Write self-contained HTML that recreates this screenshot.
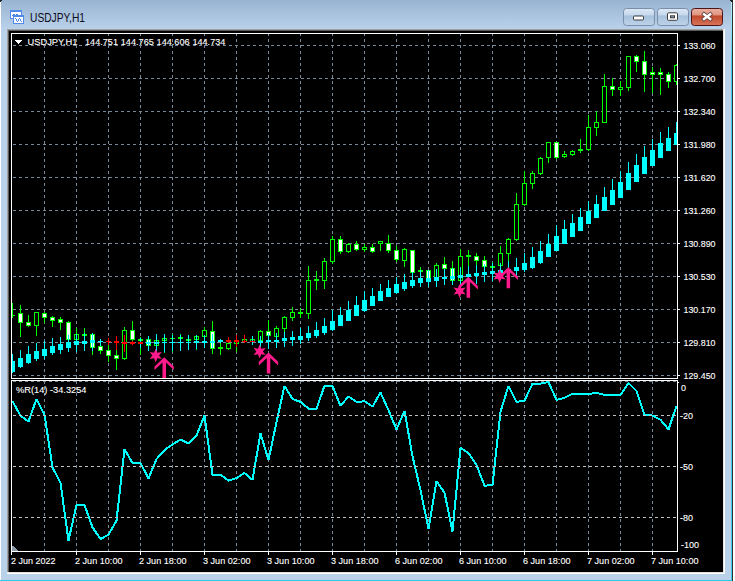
<!DOCTYPE html><html><head><meta charset="utf-8"><style>
html,body{margin:0;padding:0;background:#fff;overflow:hidden}
svg{display:block}
.t{font-family:"Liberation Sans",sans-serif;font-size:9.8px;fill:#ffffff;stroke:#ffffff;stroke-width:0.12px}
.tt{font-family:"Liberation Sans",sans-serif;font-size:12px;fill:#0a0a20}
</style></head><body><svg width="735" height="581" viewBox="0 0 735 581" shape-rendering="crispEdges">
<defs><linearGradient id="tb" x1="0" y1="0" x2="0" y2="1"><stop offset="0" stop-color="#98b4d2"/><stop offset="1" stop-color="#bad1ea"/></linearGradient><linearGradient id="bmin" x1="0" y1="0" x2="0" y2="1"><stop offset="0" stop-color="#dce8f5"/><stop offset="0.4" stop-color="#c6d8ec"/><stop offset="0.42" stop-color="#a6c0dc"/><stop offset="1" stop-color="#bed3ea"/></linearGradient><linearGradient id="bcls" x1="0" y1="0" x2="0" y2="1"><stop offset="0" stop-color="#eab0a2"/><stop offset="0.4" stop-color="#df9580"/><stop offset="0.42" stop-color="#c0472b"/><stop offset="1" stop-color="#d8765c"/></linearGradient><linearGradient id="rc" x1="0" y1="0" x2="0" y2="1"><stop offset="0" stop-color="#c0f4ff"/><stop offset="1" stop-color="#3ccdf0"/></linearGradient><clipPath id="mc"><rect x="12" y="34" width="665" height="344"/></clipPath><clipPath id="ic"><rect x="12" y="381" width="665" height="170"/></clipPath></defs>
<rect x="0" y="0" width="735" height="581" fill="#ffffff"/>
<rect x="0" y="0" width="732" height="581" fill="#bad1ea"/>
<rect x="0" y="0" width="732" height="29" fill="url(#tb)"/>
<rect x="0" y="0" width="1" height="581" fill="#ffffff"/>
<rect x="731" y="0" width="1" height="581" fill="#3ccdf0"/>
<rect x="731" y="2" width="1" height="60" fill="url(#rc)"/>
<rect x="732" y="0" width="1" height="581" fill="#303030"/>
<rect x="0" y="580" width="732" height="1" fill="#2ccbe8"/>
<path d="M0 0h2v1h-1v1h-1z" fill="#202020"/>
<path d="M730 0h3v2h-2v-1h-1z" fill="#202020"/>
<g shape-rendering="crispEdges"><rect x="10" y="10" width="12" height="9" fill="#4f8ae8"/><rect x="11" y="12" width="10" height="6" fill="#ffffff"/><path d="M12 15h1v-1h1v1h1M16 14h1v1h1v1h1" fill="none" stroke="#4f8ae8"/><rect x="13" y="15" width="11" height="9" fill="#4f8ae8"/><rect x="14" y="17" width="9" height="6" fill="#ffffff"/><rect x="15" y="18" width="1" height="1" fill="#4f8ae8"/><rect x="16" y="19" width="1" height="2" fill="#4f8ae8"/><rect x="17" y="21" width="1" height="1" fill="#4f8ae8"/><rect x="18" y="19" width="1" height="2" fill="#4f8ae8"/><rect x="19" y="18" width="1" height="1" fill="#4f8ae8"/><rect x="20" y="19" width="1" height="2" fill="#4f8ae8"/><rect x="21" y="21" width="1" height="1" fill="#4f8ae8"/></g>
<text x="30" y="22" class="tt" textLength="55" lengthAdjust="spacingAndGlyphs">USDJPY,H1</text>
<rect x="623.5" y="8.5" width="31" height="17" rx="3" ry="3" fill="url(#bmin)" stroke="#7a8ea8" shape-rendering="geometricPrecision"/>
<rect x="657.5" y="8.5" width="31" height="17" rx="3" ry="3" fill="url(#bmin)" stroke="#7a8ea8" shape-rendering="geometricPrecision"/>
<rect x="691.5" y="8.5" width="31" height="17" rx="3" ry="3" fill="url(#bcls)" stroke="#4a1418" shape-rendering="geometricPrecision"/>
<rect x="633.5" y="16" width="10" height="4" fill="#ffffff" stroke="#3c3c3c" rx="1" shape-rendering="geometricPrecision"/>
<rect x="667.5" y="12.8" width="10" height="7.5" fill="#ffffff" stroke="#3c3c3c" rx="1" shape-rendering="geometricPrecision"/>
<rect x="670.5" y="15.8" width="4" height="2" fill="#8aa0b8" stroke="#3c3c3c" shape-rendering="geometricPrecision"/>
<path d="M704 14.2L710.2 19M710.2 14.2L704 19" stroke="#5a3a38" stroke-width="4" stroke-linecap="square" shape-rendering="geometricPrecision"/>
<path d="M704 14.2L710.2 19M710.2 14.2L704 19" stroke="#ffffff" stroke-width="2.4" stroke-linecap="square" shape-rendering="geometricPrecision"/>
<rect x="7" y="29" width="718" height="545" fill="#ffffff"/>
<rect x="7" y="29" width="716" height="543" fill="#a0a0a0"/>
<rect x="8" y="30" width="715" height="542" fill="#5a5a5a"/>
<rect x="9" y="31" width="714" height="541" fill="#000000"/>
<rect x="723" y="29" width="1" height="544" fill="#e3e3e3"/>
<rect x="7" y="572" width="717" height="1" fill="#e3e3e3"/>
<line x1="13" y1="45.5" x2="676" y2="45.5" stroke="#778899" stroke-dasharray="3 3"/>
<line x1="13" y1="78.5" x2="676" y2="78.5" stroke="#778899" stroke-dasharray="3 3"/>
<line x1="13" y1="111.5" x2="676" y2="111.5" stroke="#778899" stroke-dasharray="3 3"/>
<line x1="13" y1="144.5" x2="676" y2="144.5" stroke="#778899" stroke-dasharray="3 3"/>
<line x1="13" y1="177.5" x2="676" y2="177.5" stroke="#778899" stroke-dasharray="3 3"/>
<line x1="13" y1="210.5" x2="676" y2="210.5" stroke="#778899" stroke-dasharray="3 3"/>
<line x1="13" y1="243.5" x2="676" y2="243.5" stroke="#778899" stroke-dasharray="3 3"/>
<line x1="13" y1="276.5" x2="676" y2="276.5" stroke="#778899" stroke-dasharray="3 3"/>
<line x1="13" y1="309.5" x2="676" y2="309.5" stroke="#778899" stroke-dasharray="3 3"/>
<line x1="13" y1="342.5" x2="676" y2="342.5" stroke="#778899" stroke-dasharray="3 3"/>
<line x1="13" y1="375.5" x2="676" y2="375.5" stroke="#778899" stroke-dasharray="3 3"/>
<line x1="44.5" y1="33" x2="44.5" y2="378" stroke="#778899" stroke-dasharray="3 3"/>
<line x1="44.5" y1="381" x2="44.5" y2="551" stroke="#778899" stroke-dasharray="3 3"/>
<line x1="76.5" y1="33" x2="76.5" y2="378" stroke="#778899" stroke-dasharray="3 3"/>
<line x1="76.5" y1="381" x2="76.5" y2="551" stroke="#778899" stroke-dasharray="3 3"/>
<line x1="108.5" y1="33" x2="108.5" y2="378" stroke="#778899" stroke-dasharray="3 3"/>
<line x1="108.5" y1="381" x2="108.5" y2="551" stroke="#778899" stroke-dasharray="3 3"/>
<line x1="140.5" y1="33" x2="140.5" y2="378" stroke="#778899" stroke-dasharray="3 3"/>
<line x1="140.5" y1="381" x2="140.5" y2="551" stroke="#778899" stroke-dasharray="3 3"/>
<line x1="172.5" y1="33" x2="172.5" y2="378" stroke="#778899" stroke-dasharray="3 3"/>
<line x1="172.5" y1="381" x2="172.5" y2="551" stroke="#778899" stroke-dasharray="3 3"/>
<line x1="204.5" y1="33" x2="204.5" y2="378" stroke="#778899" stroke-dasharray="3 3"/>
<line x1="204.5" y1="381" x2="204.5" y2="551" stroke="#778899" stroke-dasharray="3 3"/>
<line x1="236.5" y1="33" x2="236.5" y2="378" stroke="#778899" stroke-dasharray="3 3"/>
<line x1="236.5" y1="381" x2="236.5" y2="551" stroke="#778899" stroke-dasharray="3 3"/>
<line x1="268.5" y1="33" x2="268.5" y2="378" stroke="#778899" stroke-dasharray="3 3"/>
<line x1="268.5" y1="381" x2="268.5" y2="551" stroke="#778899" stroke-dasharray="3 3"/>
<line x1="300.5" y1="33" x2="300.5" y2="378" stroke="#778899" stroke-dasharray="3 3"/>
<line x1="300.5" y1="381" x2="300.5" y2="551" stroke="#778899" stroke-dasharray="3 3"/>
<line x1="332.5" y1="33" x2="332.5" y2="378" stroke="#778899" stroke-dasharray="3 3"/>
<line x1="332.5" y1="381" x2="332.5" y2="551" stroke="#778899" stroke-dasharray="3 3"/>
<line x1="364.5" y1="33" x2="364.5" y2="378" stroke="#778899" stroke-dasharray="3 3"/>
<line x1="364.5" y1="381" x2="364.5" y2="551" stroke="#778899" stroke-dasharray="3 3"/>
<line x1="396.5" y1="33" x2="396.5" y2="378" stroke="#778899" stroke-dasharray="3 3"/>
<line x1="396.5" y1="381" x2="396.5" y2="551" stroke="#778899" stroke-dasharray="3 3"/>
<line x1="428.5" y1="33" x2="428.5" y2="378" stroke="#778899" stroke-dasharray="3 3"/>
<line x1="428.5" y1="381" x2="428.5" y2="551" stroke="#778899" stroke-dasharray="3 3"/>
<line x1="460.5" y1="33" x2="460.5" y2="378" stroke="#778899" stroke-dasharray="3 3"/>
<line x1="460.5" y1="381" x2="460.5" y2="551" stroke="#778899" stroke-dasharray="3 3"/>
<line x1="492.5" y1="33" x2="492.5" y2="378" stroke="#778899" stroke-dasharray="3 3"/>
<line x1="492.5" y1="381" x2="492.5" y2="551" stroke="#778899" stroke-dasharray="3 3"/>
<line x1="524.5" y1="33" x2="524.5" y2="378" stroke="#778899" stroke-dasharray="3 3"/>
<line x1="524.5" y1="381" x2="524.5" y2="551" stroke="#778899" stroke-dasharray="3 3"/>
<line x1="556.5" y1="33" x2="556.5" y2="378" stroke="#778899" stroke-dasharray="3 3"/>
<line x1="556.5" y1="381" x2="556.5" y2="551" stroke="#778899" stroke-dasharray="3 3"/>
<line x1="588.5" y1="33" x2="588.5" y2="378" stroke="#778899" stroke-dasharray="3 3"/>
<line x1="588.5" y1="381" x2="588.5" y2="551" stroke="#778899" stroke-dasharray="3 3"/>
<line x1="620.5" y1="33" x2="620.5" y2="378" stroke="#778899" stroke-dasharray="3 3"/>
<line x1="620.5" y1="381" x2="620.5" y2="551" stroke="#778899" stroke-dasharray="3 3"/>
<line x1="652.5" y1="33" x2="652.5" y2="378" stroke="#778899" stroke-dasharray="3 3"/>
<line x1="652.5" y1="381" x2="652.5" y2="551" stroke="#778899" stroke-dasharray="3 3"/>
<line x1="13" y1="381.5" x2="676" y2="381.5" stroke="#778899" stroke-dasharray="3 3"/>
<g clip-path="url(#mc)">
<rect x="12" y="303" width="1" height="15" fill="#00ff00"/>
<rect x="10" y="315" width="5" height="1" fill="#00ff00"/>
<rect x="20" y="305" width="1" height="32" fill="#00ff00"/>
<rect x="18" y="313" width="5" height="10" fill="#00ff00"/>
<rect x="19" y="314" width="3" height="8" fill="#ffffff"/>
<rect x="28" y="315" width="1" height="12" fill="#00ff00"/>
<rect x="26" y="322" width="5" height="4" fill="#00ff00"/>
<rect x="27" y="323" width="3" height="2" fill="#ffffff"/>
<rect x="36" y="312" width="1" height="24" fill="#00ff00"/>
<rect x="34" y="312" width="5" height="14" fill="#00ff00"/>
<rect x="35" y="313" width="3" height="12" fill="#000000"/>
<rect x="44" y="312" width="1" height="11" fill="#00ff00"/>
<rect x="42" y="313" width="5" height="5" fill="#00ff00"/>
<rect x="43" y="314" width="3" height="3" fill="#ffffff"/>
<rect x="52" y="316" width="1" height="11" fill="#00ff00"/>
<rect x="50" y="317" width="5" height="4" fill="#00ff00"/>
<rect x="51" y="318" width="3" height="2" fill="#ffffff"/>
<rect x="60" y="317" width="1" height="13" fill="#00ff00"/>
<rect x="58" y="319" width="5" height="4" fill="#00ff00"/>
<rect x="59" y="320" width="3" height="2" fill="#ffffff"/>
<rect x="68" y="321" width="1" height="25" fill="#00ff00"/>
<rect x="66" y="322" width="5" height="18" fill="#00ff00"/>
<rect x="67" y="323" width="3" height="16" fill="#ffffff"/>
<rect x="76" y="328" width="1" height="18" fill="#00ff00"/>
<rect x="74" y="334" width="5" height="6" fill="#00ff00"/>
<rect x="75" y="335" width="3" height="4" fill="#000000"/>
<rect x="84" y="328" width="1" height="22" fill="#00ff00"/>
<rect x="82" y="334" width="5" height="2" fill="#00ff00"/>
<rect x="92" y="333" width="1" height="22" fill="#00ff00"/>
<rect x="90" y="334" width="5" height="14" fill="#00ff00"/>
<rect x="91" y="335" width="3" height="12" fill="#ffffff"/>
<rect x="100" y="341" width="1" height="13" fill="#00ff00"/>
<rect x="98" y="346" width="5" height="5" fill="#00ff00"/>
<rect x="99" y="347" width="3" height="3" fill="#ffffff"/>
<rect x="108" y="341" width="1" height="21" fill="#00ff00"/>
<rect x="106" y="350" width="5" height="6" fill="#00ff00"/>
<rect x="107" y="351" width="3" height="4" fill="#ffffff"/>
<rect x="116" y="349" width="1" height="21" fill="#00ff00"/>
<rect x="114" y="355" width="5" height="4" fill="#00ff00"/>
<rect x="115" y="356" width="3" height="2" fill="#ffffff"/>
<rect x="124" y="327" width="1" height="33" fill="#00ff00"/>
<rect x="122" y="330" width="5" height="29" fill="#00ff00"/>
<rect x="123" y="331" width="3" height="27" fill="#000000"/>
<rect x="132" y="321" width="1" height="21" fill="#00ff00"/>
<rect x="130" y="330" width="5" height="10" fill="#00ff00"/>
<rect x="131" y="331" width="3" height="8" fill="#ffffff"/>
<rect x="140" y="337" width="1" height="18" fill="#00ff00"/>
<rect x="138" y="339" width="5" height="2" fill="#00ff00"/>
<rect x="148" y="336" width="1" height="15" fill="#00ff00"/>
<rect x="146" y="339" width="5" height="7" fill="#00ff00"/>
<rect x="147" y="340" width="3" height="5" fill="#ffffff"/>
<rect x="156" y="334" width="1" height="18" fill="#00ff00"/>
<rect x="154" y="340" width="5" height="6" fill="#00ff00"/>
<rect x="155" y="341" width="3" height="4" fill="#000000"/>
<rect x="164" y="334" width="1" height="19" fill="#00ff00"/>
<rect x="162" y="338" width="5" height="3" fill="#00ff00"/>
<rect x="163" y="339" width="3" height="1" fill="#000000"/>
<rect x="172" y="334" width="1" height="18" fill="#00ff00"/>
<rect x="170" y="338" width="5" height="1" fill="#00ff00"/>
<rect x="180" y="334" width="1" height="17" fill="#00ff00"/>
<rect x="178" y="337" width="5" height="2" fill="#00ff00"/>
<rect x="188" y="335" width="1" height="15" fill="#00ff00"/>
<rect x="186" y="339" width="5" height="2" fill="#00ff00"/>
<rect x="196" y="335" width="1" height="15" fill="#00ff00"/>
<rect x="194" y="336" width="5" height="4" fill="#00ff00"/>
<rect x="195" y="337" width="3" height="2" fill="#000000"/>
<rect x="204" y="327" width="1" height="21" fill="#00ff00"/>
<rect x="202" y="330" width="5" height="7" fill="#00ff00"/>
<rect x="203" y="331" width="3" height="5" fill="#000000"/>
<rect x="212" y="321" width="1" height="33" fill="#00ff00"/>
<rect x="210" y="331" width="5" height="18" fill="#00ff00"/>
<rect x="211" y="332" width="3" height="16" fill="#ffffff"/>
<rect x="220" y="339" width="1" height="16" fill="#00ff00"/>
<rect x="218" y="347" width="5" height="2" fill="#00ff00"/>
<rect x="228" y="337" width="1" height="13" fill="#00ff00"/>
<rect x="226" y="343" width="5" height="6" fill="#00ff00"/>
<rect x="227" y="344" width="3" height="4" fill="#000000"/>
<rect x="236" y="335" width="1" height="17" fill="#00ff00"/>
<rect x="234" y="340" width="5" height="4" fill="#00ff00"/>
<rect x="235" y="341" width="3" height="2" fill="#000000"/>
<rect x="244" y="335" width="1" height="7" fill="#00ff00"/>
<rect x="242" y="339" width="5" height="3" fill="#00ff00"/>
<rect x="243" y="340" width="3" height="1" fill="#000000"/>
<rect x="252" y="336" width="1" height="9" fill="#00ff00"/>
<rect x="250" y="339" width="5" height="3" fill="#00ff00"/>
<rect x="251" y="340" width="3" height="1" fill="#000000"/>
<rect x="260" y="330" width="1" height="17" fill="#00ff00"/>
<rect x="258" y="331" width="5" height="10" fill="#00ff00"/>
<rect x="259" y="332" width="3" height="8" fill="#000000"/>
<rect x="268" y="320" width="1" height="29" fill="#00ff00"/>
<rect x="266" y="331" width="5" height="5" fill="#00ff00"/>
<rect x="267" y="332" width="3" height="3" fill="#ffffff"/>
<rect x="276" y="326" width="1" height="22" fill="#00ff00"/>
<rect x="274" y="328" width="5" height="9" fill="#00ff00"/>
<rect x="275" y="329" width="3" height="7" fill="#000000"/>
<rect x="284" y="316" width="1" height="31" fill="#00ff00"/>
<rect x="282" y="317" width="5" height="12" fill="#00ff00"/>
<rect x="283" y="318" width="3" height="10" fill="#000000"/>
<rect x="292" y="307" width="1" height="14" fill="#00ff00"/>
<rect x="290" y="312" width="5" height="6" fill="#00ff00"/>
<rect x="291" y="313" width="3" height="4" fill="#000000"/>
<rect x="300" y="308" width="1" height="10" fill="#00ff00"/>
<rect x="298" y="312" width="5" height="2" fill="#00ff00"/>
<rect x="308" y="266" width="1" height="53" fill="#00ff00"/>
<rect x="306" y="280" width="5" height="34" fill="#00ff00"/>
<rect x="307" y="281" width="3" height="32" fill="#000000"/>
<rect x="316" y="271" width="1" height="19" fill="#00ff00"/>
<rect x="314" y="279" width="5" height="2" fill="#00ff00"/>
<rect x="324" y="258" width="1" height="31" fill="#00ff00"/>
<rect x="322" y="261" width="5" height="20" fill="#00ff00"/>
<rect x="323" y="262" width="3" height="18" fill="#000000"/>
<rect x="332" y="236" width="1" height="28" fill="#00ff00"/>
<rect x="330" y="239" width="5" height="23" fill="#00ff00"/>
<rect x="331" y="240" width="3" height="21" fill="#000000"/>
<rect x="340" y="236" width="1" height="18" fill="#00ff00"/>
<rect x="338" y="239" width="5" height="13" fill="#00ff00"/>
<rect x="339" y="240" width="3" height="11" fill="#ffffff"/>
<rect x="348" y="243" width="1" height="10" fill="#00ff00"/>
<rect x="346" y="244" width="5" height="8" fill="#00ff00"/>
<rect x="347" y="245" width="3" height="6" fill="#000000"/>
<rect x="356" y="241" width="1" height="10" fill="#00ff00"/>
<rect x="354" y="244" width="5" height="6" fill="#00ff00"/>
<rect x="355" y="245" width="3" height="4" fill="#ffffff"/>
<rect x="364" y="244" width="1" height="8" fill="#00ff00"/>
<rect x="362" y="247" width="5" height="3" fill="#00ff00"/>
<rect x="363" y="248" width="3" height="1" fill="#000000"/>
<rect x="372" y="244" width="1" height="9" fill="#00ff00"/>
<rect x="370" y="247" width="5" height="5" fill="#00ff00"/>
<rect x="371" y="248" width="3" height="3" fill="#ffffff"/>
<rect x="380" y="241" width="1" height="10" fill="#00ff00"/>
<rect x="378" y="241" width="5" height="3" fill="#00ff00"/>
<rect x="379" y="242" width="3" height="1" fill="#000000"/>
<rect x="388" y="235" width="1" height="18" fill="#00ff00"/>
<rect x="386" y="243" width="5" height="8" fill="#00ff00"/>
<rect x="387" y="244" width="3" height="6" fill="#ffffff"/>
<rect x="396" y="246" width="1" height="16" fill="#00ff00"/>
<rect x="394" y="250" width="5" height="10" fill="#00ff00"/>
<rect x="395" y="251" width="3" height="8" fill="#ffffff"/>
<rect x="404" y="248" width="1" height="19" fill="#00ff00"/>
<rect x="402" y="249" width="5" height="12" fill="#00ff00"/>
<rect x="403" y="250" width="3" height="10" fill="#000000"/>
<rect x="412" y="250" width="1" height="24" fill="#00ff00"/>
<rect x="410" y="250" width="5" height="23" fill="#00ff00"/>
<rect x="411" y="251" width="3" height="21" fill="#ffffff"/>
<rect x="420" y="267" width="1" height="8" fill="#00ff00"/>
<rect x="418" y="270" width="5" height="2" fill="#00ff00"/>
<rect x="428" y="270" width="1" height="17" fill="#00ff00"/>
<rect x="426" y="270" width="5" height="11" fill="#00ff00"/>
<rect x="427" y="271" width="3" height="9" fill="#ffffff"/>
<rect x="436" y="263" width="1" height="24" fill="#00ff00"/>
<rect x="434" y="265" width="5" height="16" fill="#00ff00"/>
<rect x="435" y="266" width="3" height="14" fill="#000000"/>
<rect x="444" y="257" width="1" height="28" fill="#00ff00"/>
<rect x="442" y="264" width="5" height="5" fill="#00ff00"/>
<rect x="443" y="265" width="3" height="3" fill="#ffffff"/>
<rect x="452" y="261" width="1" height="24" fill="#00ff00"/>
<rect x="450" y="268" width="5" height="13" fill="#00ff00"/>
<rect x="451" y="269" width="3" height="11" fill="#ffffff"/>
<rect x="460" y="249" width="1" height="36" fill="#00ff00"/>
<rect x="458" y="256" width="5" height="25" fill="#00ff00"/>
<rect x="459" y="257" width="3" height="23" fill="#000000"/>
<rect x="468" y="250" width="1" height="16" fill="#00ff00"/>
<rect x="466" y="255" width="5" height="2" fill="#00ff00"/>
<rect x="476" y="253" width="1" height="24" fill="#00ff00"/>
<rect x="474" y="256" width="5" height="5" fill="#00ff00"/>
<rect x="475" y="257" width="3" height="3" fill="#ffffff"/>
<rect x="484" y="256" width="1" height="20" fill="#00ff00"/>
<rect x="482" y="260" width="5" height="7" fill="#00ff00"/>
<rect x="483" y="261" width="3" height="5" fill="#ffffff"/>
<rect x="492" y="262" width="1" height="11" fill="#00ff00"/>
<rect x="490" y="266" width="5" height="2" fill="#00ff00"/>
<rect x="500" y="246" width="1" height="25" fill="#00ff00"/>
<rect x="498" y="253" width="5" height="13" fill="#00ff00"/>
<rect x="499" y="254" width="3" height="11" fill="#000000"/>
<rect x="508" y="238" width="1" height="25" fill="#00ff00"/>
<rect x="506" y="239" width="5" height="15" fill="#00ff00"/>
<rect x="507" y="240" width="3" height="13" fill="#000000"/>
<rect x="516" y="193" width="1" height="48" fill="#00ff00"/>
<rect x="514" y="204" width="5" height="36" fill="#00ff00"/>
<rect x="515" y="205" width="3" height="34" fill="#000000"/>
<rect x="524" y="171" width="1" height="35" fill="#00ff00"/>
<rect x="522" y="183" width="5" height="22" fill="#00ff00"/>
<rect x="523" y="184" width="3" height="20" fill="#000000"/>
<rect x="532" y="171" width="1" height="18" fill="#00ff00"/>
<rect x="530" y="173" width="5" height="11" fill="#00ff00"/>
<rect x="531" y="174" width="3" height="9" fill="#000000"/>
<rect x="540" y="157" width="1" height="18" fill="#00ff00"/>
<rect x="538" y="158" width="5" height="16" fill="#00ff00"/>
<rect x="539" y="159" width="3" height="14" fill="#000000"/>
<rect x="548" y="142" width="1" height="21" fill="#00ff00"/>
<rect x="546" y="142" width="5" height="16" fill="#00ff00"/>
<rect x="547" y="143" width="3" height="14" fill="#000000"/>
<rect x="556" y="142" width="1" height="17" fill="#00ff00"/>
<rect x="554" y="142" width="5" height="16" fill="#00ff00"/>
<rect x="555" y="143" width="3" height="14" fill="#ffffff"/>
<rect x="564" y="151" width="1" height="7" fill="#00ff00"/>
<rect x="562" y="154" width="5" height="3" fill="#00ff00"/>
<rect x="563" y="155" width="3" height="1" fill="#000000"/>
<rect x="572" y="150" width="1" height="6" fill="#00ff00"/>
<rect x="570" y="151" width="5" height="4" fill="#00ff00"/>
<rect x="571" y="152" width="3" height="2" fill="#000000"/>
<rect x="580" y="139" width="1" height="14" fill="#00ff00"/>
<rect x="578" y="149" width="5" height="2" fill="#00ff00"/>
<rect x="588" y="115" width="1" height="36" fill="#00ff00"/>
<rect x="586" y="127" width="5" height="23" fill="#00ff00"/>
<rect x="587" y="128" width="3" height="21" fill="#000000"/>
<rect x="596" y="111" width="1" height="25" fill="#00ff00"/>
<rect x="594" y="122" width="5" height="6" fill="#00ff00"/>
<rect x="595" y="123" width="3" height="4" fill="#000000"/>
<rect x="604" y="74" width="1" height="49" fill="#00ff00"/>
<rect x="602" y="86" width="5" height="37" fill="#00ff00"/>
<rect x="603" y="87" width="3" height="35" fill="#000000"/>
<rect x="612" y="78" width="1" height="18" fill="#00ff00"/>
<rect x="610" y="86" width="5" height="4" fill="#00ff00"/>
<rect x="611" y="87" width="3" height="2" fill="#ffffff"/>
<rect x="620" y="81" width="1" height="15" fill="#00ff00"/>
<rect x="618" y="87" width="5" height="3" fill="#00ff00"/>
<rect x="619" y="88" width="3" height="1" fill="#000000"/>
<rect x="628" y="56" width="1" height="35" fill="#00ff00"/>
<rect x="626" y="56" width="5" height="32" fill="#00ff00"/>
<rect x="627" y="57" width="3" height="30" fill="#000000"/>
<rect x="636" y="55" width="1" height="17" fill="#00ff00"/>
<rect x="634" y="56" width="5" height="6" fill="#00ff00"/>
<rect x="635" y="57" width="3" height="4" fill="#ffffff"/>
<rect x="644" y="51" width="1" height="41" fill="#00ff00"/>
<rect x="642" y="61" width="5" height="14" fill="#00ff00"/>
<rect x="643" y="62" width="3" height="12" fill="#ffffff"/>
<rect x="652" y="67" width="1" height="26" fill="#00ff00"/>
<rect x="650" y="72" width="5" height="3" fill="#00ff00"/>
<rect x="651" y="73" width="3" height="1" fill="#ffffff"/>
<rect x="660" y="68" width="1" height="27" fill="#00ff00"/>
<rect x="658" y="72" width="5" height="3" fill="#00ff00"/>
<rect x="659" y="73" width="3" height="1" fill="#ffffff"/>
<rect x="668" y="72" width="1" height="16" fill="#00ff00"/>
<rect x="666" y="74" width="5" height="8" fill="#00ff00"/>
<rect x="667" y="75" width="3" height="6" fill="#ffffff"/>
<rect x="676" y="64" width="1" height="21" fill="#00ff00"/>
<rect x="674" y="65" width="5" height="17" fill="#00ff00"/>
<rect x="675" y="66" width="3" height="15" fill="#000000"/>
<rect x="12" y="354" width="1" height="19" fill="#00ffff"/>
<rect x="10" y="361" width="5" height="11" fill="#00ffff"/>
<rect x="20" y="350" width="1" height="18" fill="#00ffff"/>
<rect x="18" y="358" width="5" height="9" fill="#00ffff"/>
<rect x="28" y="346" width="1" height="18" fill="#00ffff"/>
<rect x="26" y="354" width="5" height="9" fill="#00ffff"/>
<rect x="36" y="343" width="1" height="18" fill="#00ffff"/>
<rect x="34" y="351" width="5" height="8" fill="#00ffff"/>
<rect x="44" y="341" width="1" height="18" fill="#00ffff"/>
<rect x="42" y="349" width="5" height="7" fill="#00ffff"/>
<rect x="52" y="338" width="1" height="17" fill="#00ffff"/>
<rect x="50" y="346" width="5" height="7" fill="#00ffff"/>
<rect x="60" y="337" width="1" height="17" fill="#00ffff"/>
<rect x="58" y="344" width="5" height="6" fill="#00ffff"/>
<rect x="68" y="335" width="1" height="17" fill="#00ffff"/>
<rect x="66" y="342" width="5" height="6" fill="#00ffff"/>
<rect x="76" y="334" width="1" height="18" fill="#00ffff"/>
<rect x="74" y="341" width="5" height="4" fill="#00ffff"/>
<rect x="84" y="333" width="1" height="18" fill="#00ffff"/>
<rect x="82" y="341" width="5" height="3" fill="#00ffff"/>
<rect x="92" y="333" width="1" height="18" fill="#00ffff"/>
<rect x="90" y="340" width="5" height="3" fill="#00ffff"/>
<rect x="100" y="339" width="1" height="7" fill="#00ffff"/>
<rect x="98" y="341" width="5" height="1" fill="#00ffff"/>
<rect x="108" y="338" width="1" height="7" fill="#ff0000"/>
<rect x="106" y="341" width="5" height="1" fill="#ff0000"/>
<rect x="116" y="336" width="1" height="14" fill="#ff0000"/>
<rect x="114" y="341" width="5" height="2" fill="#ff0000"/>
<rect x="124" y="335" width="1" height="17" fill="#ff0000"/>
<rect x="122" y="342" width="5" height="2" fill="#ff0000"/>
<rect x="132" y="341" width="1" height="4" fill="#ff0000"/>
<rect x="130" y="342" width="5" height="2" fill="#ff0000"/>
<rect x="140" y="338" width="1" height="10" fill="#00ffff"/>
<rect x="138" y="342" width="5" height="2" fill="#ff0000"/>
<rect x="148" y="336" width="1" height="15" fill="#00ffff"/>
<rect x="146" y="342" width="5" height="2" fill="#00ffff"/>
<rect x="156" y="334" width="1" height="18" fill="#00ffff"/>
<rect x="154" y="342" width="5" height="2" fill="#00ffff"/>
<rect x="164" y="334" width="1" height="18" fill="#00ffff"/>
<rect x="162" y="342" width="5" height="1" fill="#00ffff"/>
<rect x="172" y="335" width="1" height="16" fill="#00ffff"/>
<rect x="170" y="342" width="5" height="1" fill="#00ffff"/>
<rect x="180" y="335" width="1" height="16" fill="#00ffff"/>
<rect x="178" y="342" width="5" height="1" fill="#00ffff"/>
<rect x="188" y="335" width="1" height="15" fill="#00ffff"/>
<rect x="186" y="342" width="5" height="1" fill="#00ffff"/>
<rect x="196" y="335" width="1" height="14" fill="#00ffff"/>
<rect x="194" y="341" width="5" height="2" fill="#00ffff"/>
<rect x="204" y="335" width="1" height="13" fill="#00ffff"/>
<rect x="202" y="341" width="5" height="2" fill="#00ffff"/>
<rect x="212" y="334" width="1" height="14" fill="#00ffff"/>
<rect x="210" y="341" width="5" height="2" fill="#00ffff"/>
<rect x="220" y="339" width="1" height="4" fill="#00ffff"/>
<rect x="218" y="340" width="5" height="2" fill="#00ffff"/>
<rect x="228" y="337" width="1" height="6" fill="#ff0000"/>
<rect x="226" y="340" width="5" height="2" fill="#ff0000"/>
<rect x="236" y="335" width="1" height="12" fill="#ff0000"/>
<rect x="234" y="340" width="5" height="2" fill="#ff0000"/>
<rect x="244" y="335" width="1" height="8" fill="#ff0000"/>
<rect x="242" y="341" width="5" height="1" fill="#ff0000"/>
<rect x="252" y="336" width="1" height="9" fill="#00ffff"/>
<rect x="250" y="341" width="5" height="1" fill="#ff0000"/>
<rect x="260" y="336" width="1" height="11" fill="#00ffff"/>
<rect x="258" y="341" width="5" height="2" fill="#00ffff"/>
<rect x="268" y="333" width="1" height="16" fill="#00ffff"/>
<rect x="266" y="340" width="5" height="2" fill="#00ffff"/>
<rect x="276" y="333" width="1" height="15" fill="#00ffff"/>
<rect x="274" y="340" width="5" height="2" fill="#00ffff"/>
<rect x="284" y="332" width="1" height="15" fill="#00ffff"/>
<rect x="282" y="338" width="5" height="3" fill="#00ffff"/>
<rect x="292" y="331" width="1" height="15" fill="#00ffff"/>
<rect x="290" y="337" width="5" height="3" fill="#00ffff"/>
<rect x="300" y="328" width="1" height="16" fill="#00ffff"/>
<rect x="298" y="336" width="5" height="4" fill="#00ffff"/>
<rect x="308" y="326" width="1" height="15" fill="#00ffff"/>
<rect x="306" y="333" width="5" height="5" fill="#00ffff"/>
<rect x="316" y="322" width="1" height="16" fill="#00ffff"/>
<rect x="314" y="330" width="5" height="6" fill="#00ffff"/>
<rect x="324" y="318" width="1" height="17" fill="#00ffff"/>
<rect x="322" y="326" width="5" height="7" fill="#00ffff"/>
<rect x="332" y="310" width="1" height="21" fill="#00ffff"/>
<rect x="330" y="321" width="5" height="9" fill="#00ffff"/>
<rect x="340" y="307" width="1" height="19" fill="#00ffff"/>
<rect x="338" y="315" width="5" height="11" fill="#00ffff"/>
<rect x="348" y="301" width="1" height="20" fill="#00ffff"/>
<rect x="346" y="310" width="5" height="11" fill="#00ffff"/>
<rect x="356" y="296" width="1" height="20" fill="#00ffff"/>
<rect x="354" y="305" width="5" height="11" fill="#00ffff"/>
<rect x="364" y="291" width="1" height="21" fill="#00ffff"/>
<rect x="362" y="300" width="5" height="11" fill="#00ffff"/>
<rect x="372" y="288" width="1" height="18" fill="#00ffff"/>
<rect x="370" y="296" width="5" height="10" fill="#00ffff"/>
<rect x="380" y="284" width="1" height="17" fill="#00ffff"/>
<rect x="378" y="291" width="5" height="10" fill="#00ffff"/>
<rect x="388" y="280" width="1" height="17" fill="#00ffff"/>
<rect x="386" y="288" width="5" height="9" fill="#00ffff"/>
<rect x="396" y="277" width="1" height="17" fill="#00ffff"/>
<rect x="394" y="284" width="5" height="9" fill="#00ffff"/>
<rect x="404" y="274" width="1" height="17" fill="#00ffff"/>
<rect x="402" y="282" width="5" height="7" fill="#00ffff"/>
<rect x="412" y="272" width="1" height="16" fill="#00ffff"/>
<rect x="410" y="280" width="5" height="6" fill="#00ffff"/>
<rect x="420" y="270" width="1" height="17" fill="#00ffff"/>
<rect x="418" y="278" width="5" height="5" fill="#00ffff"/>
<rect x="428" y="270" width="1" height="17" fill="#00ffff"/>
<rect x="426" y="278" width="5" height="4" fill="#00ffff"/>
<rect x="436" y="269" width="1" height="18" fill="#00ffff"/>
<rect x="434" y="277" width="5" height="4" fill="#00ffff"/>
<rect x="444" y="269" width="1" height="16" fill="#00ffff"/>
<rect x="442" y="277" width="5" height="2" fill="#00ffff"/>
<rect x="452" y="268" width="1" height="17" fill="#00ffff"/>
<rect x="450" y="276" width="5" height="3" fill="#00ffff"/>
<rect x="460" y="267" width="1" height="18" fill="#00ffff"/>
<rect x="458" y="275" width="5" height="3" fill="#00ffff"/>
<rect x="468" y="266" width="1" height="17" fill="#00ffff"/>
<rect x="466" y="274" width="5" height="3" fill="#00ffff"/>
<rect x="476" y="265" width="1" height="19" fill="#00ffff"/>
<rect x="474" y="273" width="5" height="3" fill="#00ffff"/>
<rect x="484" y="264" width="1" height="18" fill="#00ffff"/>
<rect x="482" y="272" width="5" height="3" fill="#00ffff"/>
<rect x="492" y="263" width="1" height="18" fill="#00ffff"/>
<rect x="490" y="271" width="5" height="3" fill="#00ffff"/>
<rect x="500" y="263" width="1" height="17" fill="#00ffff"/>
<rect x="498" y="270" width="5" height="3" fill="#00ffff"/>
<rect x="508" y="261" width="1" height="16" fill="#00ffff"/>
<rect x="506" y="269" width="5" height="3" fill="#00ffff"/>
<rect x="516" y="258" width="1" height="18" fill="#00ffff"/>
<rect x="514" y="267" width="5" height="4" fill="#00ffff"/>
<rect x="524" y="253" width="1" height="19" fill="#00ffff"/>
<rect x="522" y="263" width="5" height="7" fill="#00ffff"/>
<rect x="532" y="247" width="1" height="22" fill="#00ffff"/>
<rect x="530" y="257" width="5" height="11" fill="#00ffff"/>
<rect x="540" y="241" width="1" height="23" fill="#00ffff"/>
<rect x="538" y="251" width="5" height="12" fill="#00ffff"/>
<rect x="548" y="234" width="1" height="23" fill="#00ffff"/>
<rect x="546" y="244" width="5" height="13" fill="#00ffff"/>
<rect x="556" y="225" width="1" height="26" fill="#00ffff"/>
<rect x="554" y="236" width="5" height="15" fill="#00ffff"/>
<rect x="564" y="220" width="1" height="24" fill="#00ffff"/>
<rect x="562" y="229" width="5" height="15" fill="#00ffff"/>
<rect x="572" y="214" width="1" height="23" fill="#00ffff"/>
<rect x="570" y="223" width="5" height="14" fill="#00ffff"/>
<rect x="580" y="208" width="1" height="23" fill="#00ffff"/>
<rect x="578" y="217" width="5" height="14" fill="#00ffff"/>
<rect x="588" y="201" width="1" height="23" fill="#00ffff"/>
<rect x="586" y="211" width="5" height="13" fill="#00ffff"/>
<rect x="596" y="195" width="1" height="23" fill="#00ffff"/>
<rect x="594" y="204" width="5" height="14" fill="#00ffff"/>
<rect x="604" y="187" width="1" height="24" fill="#00ffff"/>
<rect x="602" y="197" width="5" height="14" fill="#00ffff"/>
<rect x="612" y="179" width="1" height="26" fill="#00ffff"/>
<rect x="610" y="190" width="5" height="15" fill="#00ffff"/>
<rect x="620" y="171" width="1" height="27" fill="#00ffff"/>
<rect x="618" y="182" width="5" height="16" fill="#00ffff"/>
<rect x="628" y="162" width="1" height="28" fill="#00ffff"/>
<rect x="626" y="173" width="5" height="17" fill="#00ffff"/>
<rect x="636" y="154" width="1" height="28" fill="#00ffff"/>
<rect x="634" y="165" width="5" height="17" fill="#00ffff"/>
<rect x="644" y="146" width="1" height="28" fill="#00ffff"/>
<rect x="642" y="157" width="5" height="17" fill="#00ffff"/>
<rect x="652" y="139" width="1" height="27" fill="#00ffff"/>
<rect x="650" y="150" width="5" height="16" fill="#00ffff"/>
<rect x="660" y="132" width="1" height="26" fill="#00ffff"/>
<rect x="658" y="143" width="5" height="15" fill="#00ffff"/>
<rect x="668" y="127" width="1" height="24" fill="#00ffff"/>
<rect x="666" y="138" width="5" height="13" fill="#00ffff"/>
<rect x="676" y="122" width="1" height="23" fill="#00ffff"/>
<rect x="674" y="133" width="5" height="12" fill="#00ffff"/>
</g>
<g clip-path="url(#mc)"><polygon points="164.20,357.30 173.80,366.50 173.80,370.10 166.00,362.60 166.00,378.30 162.50,378.30 162.50,362.60 154.50,370.10 154.50,366.50" fill="#ff1a8c" shape-rendering="geometricPrecision"/></g>
<polygon points="155.70,348.50 157.35,352.64 161.76,352.00 159.00,355.50 161.76,359.00 157.35,358.36 155.70,362.50 154.05,358.36 149.64,359.00 152.40,355.50 149.64,352.00 154.05,352.64" fill="#ff1a8c" shape-rendering="geometricPrecision"/>
<g clip-path="url(#mc)"><polygon points="268.50,352.60 278.10,361.80 278.10,365.40 270.30,357.90 270.30,373.60 266.80,373.60 266.80,357.90 258.80,365.40 258.80,361.80" fill="#ff1a8c" shape-rendering="geometricPrecision"/></g>
<polygon points="259.60,344.50 261.25,348.64 265.66,348.00 262.90,351.50 265.66,355.00 261.25,354.36 259.60,358.50 257.95,354.36 253.54,355.00 256.30,351.50 253.54,348.00 257.95,348.64" fill="#ff1a8c" shape-rendering="geometricPrecision"/>
<g clip-path="url(#mc)"><polygon points="468.30,276.80 477.90,286.00 477.90,289.60 470.10,282.10 470.10,297.80 466.60,297.80 466.60,282.10 458.60,289.60 458.60,286.00" fill="#ff1a8c" shape-rendering="geometricPrecision"/></g>
<polygon points="459.60,284.00 461.25,288.14 465.66,287.50 462.90,291.00 465.66,294.50 461.25,293.86 459.60,298.00 457.95,293.86 453.54,294.50 456.30,291.00 453.54,287.50 457.95,288.14" fill="#ff1a8c" shape-rendering="geometricPrecision"/>
<g clip-path="url(#mc)"><polygon points="508.30,267.20 517.90,276.40 517.90,280.00 510.10,272.50 510.10,288.20 506.60,288.20 506.60,272.50 498.60,280.00 498.60,276.40" fill="#ff1a8c" shape-rendering="geometricPrecision"/></g>
<polygon points="499.60,269.00 501.25,273.14 505.66,272.50 502.90,276.00 505.66,279.50 501.25,278.86 499.60,283.00 497.95,278.86 493.54,279.50 496.30,276.00 493.54,272.50 497.95,273.14" fill="#ff1a8c" shape-rendering="geometricPrecision"/>
<g clip-path="url(#ic)"><polyline points="12.5,401.3 20.5,415.6 28.5,421.5 36.5,399.0 44.5,414.6 52.5,467.4 60.5,482.8 68.5,540.6 76.5,505.0 84.5,505.0 92.5,527.3 100.5,539.1 108.5,534.6 116.5,520.6 124.5,449.1 132.5,463.0 140.5,463.0 148.5,478.4 156.5,459.1 164.5,450.2 172.5,444.3 180.5,439.6 188.5,443.4 196.5,435.4 204.5,415.6 212.5,474.8 220.5,474.8 228.5,480.6 236.5,478.1 244.5,473.0 252.5,479.9 260.5,433.3 268.5,460.0 276.5,422.1 284.5,385.9 292.5,399.0 300.5,401.9 308.5,408.6 316.5,408.6 324.5,385.9 332.5,385.9 340.5,405.8 348.5,396.4 356.5,401.9 364.5,401.3 372.5,406.6 380.5,392.5 388.5,410.2 396.5,429.5 404.5,410.8 412.5,456.2 420.5,490.2 428.5,528.7 436.5,481.3 444.5,492.6 452.5,531.7 460.5,447.8 468.5,453.2 476.5,465.0 484.5,485.8 492.5,484.9 500.5,411.7 508.5,385.9 516.5,401.9 524.5,400.7 532.5,383.6 540.5,383.6 548.5,382.1 556.5,399.9 564.5,397.8 572.5,393.9 580.5,393.9 588.5,393.9 596.5,393.0 604.5,394.8 612.5,394.8 620.5,394.8 628.5,383.0 636.5,391.0 644.5,414.7 652.5,415.6 660.5,419.7 668.5,429.5 676.5,405.8" fill="none" stroke="#00ffff" stroke-width="2" stroke-linejoin="bevel"/></g>
<line x1="13" y1="415.5" x2="676" y2="415.5" stroke="#c0c0c0" stroke-dasharray="3 3"/>
<line x1="13" y1="466.5" x2="676" y2="466.5" stroke="#c0c0c0" stroke-dasharray="3 3"/>
<line x1="13" y1="517.5" x2="676" y2="517.5" stroke="#c0c0c0" stroke-dasharray="3 3"/>
<rect x="11.5" y="33.5" width="666" height="345" fill="none" stroke="#ffffff" stroke-width="1"/>
<rect x="11.5" y="380.5" width="666" height="171" fill="none" stroke="#ffffff" stroke-width="1"/>
<path d="M12 546h1l5 5h-6z" fill="#8a9aa8"/>
<rect x="678" y="45" width="2" height="1" fill="#ffffff"/>
<text x="683.5" y="48.9" class="t" textLength="32" lengthAdjust="spacingAndGlyphs">133.060</text>
<rect x="678" y="78" width="2" height="1" fill="#ffffff"/>
<text x="683.5" y="81.9" class="t" textLength="32" lengthAdjust="spacingAndGlyphs">132.700</text>
<rect x="678" y="111" width="2" height="1" fill="#ffffff"/>
<text x="683.5" y="114.9" class="t" textLength="32" lengthAdjust="spacingAndGlyphs">132.340</text>
<rect x="678" y="144" width="2" height="1" fill="#ffffff"/>
<text x="683.5" y="147.9" class="t" textLength="32" lengthAdjust="spacingAndGlyphs">131.980</text>
<rect x="678" y="177" width="2" height="1" fill="#ffffff"/>
<text x="683.5" y="180.9" class="t" textLength="32" lengthAdjust="spacingAndGlyphs">131.620</text>
<rect x="678" y="210" width="2" height="1" fill="#ffffff"/>
<text x="683.5" y="213.9" class="t" textLength="32" lengthAdjust="spacingAndGlyphs">131.260</text>
<rect x="678" y="243" width="2" height="1" fill="#ffffff"/>
<text x="683.5" y="246.9" class="t" textLength="32" lengthAdjust="spacingAndGlyphs">130.890</text>
<rect x="678" y="276" width="2" height="1" fill="#ffffff"/>
<text x="683.5" y="279.9" class="t" textLength="32" lengthAdjust="spacingAndGlyphs">130.530</text>
<rect x="678" y="309" width="2" height="1" fill="#ffffff"/>
<text x="683.5" y="312.9" class="t" textLength="32" lengthAdjust="spacingAndGlyphs">130.170</text>
<rect x="678" y="342" width="2" height="1" fill="#ffffff"/>
<text x="683.5" y="345.9" class="t" textLength="32" lengthAdjust="spacingAndGlyphs">129.810</text>
<rect x="678" y="375" width="2" height="1" fill="#ffffff"/>
<text x="683.5" y="378.9" class="t" textLength="32" lengthAdjust="spacingAndGlyphs">129.450</text>
<text x="681" y="391" class="t" textLength="5" lengthAdjust="spacingAndGlyphs">0</text>
<text x="680" y="419" class="t" textLength="13" lengthAdjust="spacingAndGlyphs">-20</text>
<text x="680" y="470" class="t" textLength="13" lengthAdjust="spacingAndGlyphs">-50</text>
<text x="680" y="521" class="t" textLength="13" lengthAdjust="spacingAndGlyphs">-80</text>
<text x="681" y="548" class="t" textLength="18" lengthAdjust="spacingAndGlyphs">-100</text>
<rect x="678" y="382" width="1" height="1" fill="#ffffff"/>
<text x="11" y="564" class="t" textLength="44.5" lengthAdjust="spacingAndGlyphs">2 Jun 2022</text>
<rect x="76" y="551" width="1" height="4" fill="#ffffff"/>
<text x="75" y="564" class="t" textLength="47.5" lengthAdjust="spacingAndGlyphs">2 Jun 10:00</text>
<rect x="140" y="551" width="1" height="4" fill="#ffffff"/>
<text x="139" y="564" class="t" textLength="47.5" lengthAdjust="spacingAndGlyphs">2 Jun 18:00</text>
<rect x="204" y="551" width="1" height="4" fill="#ffffff"/>
<text x="203" y="564" class="t" textLength="47.5" lengthAdjust="spacingAndGlyphs">3 Jun 02:00</text>
<rect x="268" y="551" width="1" height="4" fill="#ffffff"/>
<text x="267" y="564" class="t" textLength="47.5" lengthAdjust="spacingAndGlyphs">3 Jun 10:00</text>
<rect x="332" y="551" width="1" height="4" fill="#ffffff"/>
<text x="331" y="564" class="t" textLength="47.5" lengthAdjust="spacingAndGlyphs">3 Jun 18:00</text>
<rect x="396" y="551" width="1" height="4" fill="#ffffff"/>
<text x="395" y="564" class="t" textLength="47.5" lengthAdjust="spacingAndGlyphs">6 Jun 02:00</text>
<rect x="460" y="551" width="1" height="4" fill="#ffffff"/>
<text x="459" y="564" class="t" textLength="47.5" lengthAdjust="spacingAndGlyphs">6 Jun 10:00</text>
<rect x="524" y="551" width="1" height="4" fill="#ffffff"/>
<text x="523" y="564" class="t" textLength="47.5" lengthAdjust="spacingAndGlyphs">6 Jun 18:00</text>
<rect x="588" y="551" width="1" height="4" fill="#ffffff"/>
<text x="587" y="564" class="t" textLength="47.5" lengthAdjust="spacingAndGlyphs">7 Jun 02:00</text>
<rect x="652" y="551" width="1" height="4" fill="#ffffff"/>
<text x="651" y="564" class="t" textLength="47.5" lengthAdjust="spacingAndGlyphs">7 Jun 10:00</text>
<rect x="11" y="551" width="1" height="4" fill="#ffffff"/>
<path d="M15 40h7l-3.5 4z" fill="#ffffff"/>
<text x="27.5" y="45" class="t" textLength="50" lengthAdjust="spacingAndGlyphs">USDJPY,H1</text>
<text x="85.0" y="45" class="t" textLength="33" lengthAdjust="spacingAndGlyphs">144.751</text>
<text x="120.8" y="45" class="t" textLength="33" lengthAdjust="spacingAndGlyphs">144.765</text>
<text x="156.6" y="45" class="t" textLength="33" lengthAdjust="spacingAndGlyphs">144.606</text>
<text x="192.4" y="45" class="t" textLength="33" lengthAdjust="spacingAndGlyphs">144.734</text>
<text x="16" y="393" class="t" textLength="70.5" lengthAdjust="spacingAndGlyphs">%R(14) -34.3254</text>
</svg></body></html>
